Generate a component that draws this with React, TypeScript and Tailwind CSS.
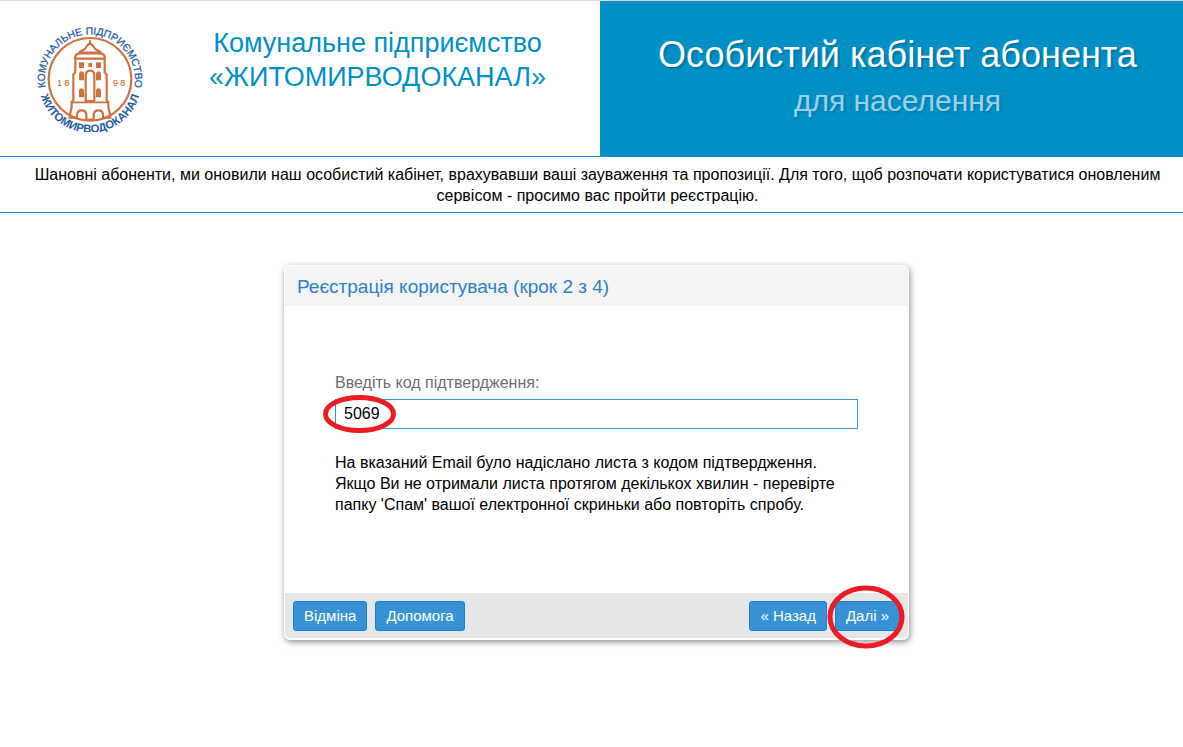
import React from "react";

function Logo() {
  return (
    <svg
      className="h-[106px] w-[106px] shrink-0"
      viewBox="36 33 318 318"
      role="img"
      aria-label="Житомирводоканал"
    >
      <defs>
        <path id="ring-top" d="M 61.9 217 A 135.200 135.200 0 1 1 328.1 217" />
        <path id="ring-bottom" d="M 41 199 A 154 154 0 0 0 349 199" />
      </defs>
      <g fill="none" stroke="#d0703a" strokeWidth="6.5" strokeLinejoin="round">
        <circle cx="195" cy="193" r="124" />
        <path d="M195 76 V88" />
        <path d="M195 86 C186 88 186 95 180 101 C174 107 166 106 162 113 H228 C224 106 216 107 210 101 C204 95 204 88 195 86 Z" />
        <path d="M150 131 Q150 115 166 115 H224 Q240 115 240 131 Z" />
        <path d="M151 133 V172 L145 179 V258 M239 133 V172 L245 179 V258" />
        <path d="M182 258 V182 Q182 167 195 167 Q208 167 208 182 V258 Z" />
        <path d="M145 260 H140 V275 L134 304 M245 260 H250 V275 L256 304" />
        <path d="M140 262 H250" strokeWidth="5" />
        <path d="M130 308 H156 V300 Q156 286 170 286 Q184 286 184 300 V314 H206 V300 Q206 286 220 286 Q234 286 234 300 V308 H260" />
      </g>
      <g fill="#d0703a">
        <rect x="162" y="142" width="15" height="17" />
        <rect x="190" y="144" width="11" height="12" />
        <rect x="213" y="142" width="15" height="17" />
        <path d="M162 196 V179 Q162 169 169.500 169 Q177 169 177 179 V196 Z" />
        <path d="M213 196 V179 Q213 169 220.500 169 Q228 169 228 179 V196 Z" />
        <path d="M162 247 V230 Q162 220 169.500 220 Q177 220 177 230 V247 Z" />
        <path d="M213 247 V230 Q213 220 220.500 220 Q228 220 228 230 V247 Z" />
      </g>
      <g
        fill="#d0703a"
        stroke="#d0703a"
        strokeWidth="0.5"
        fontFamily="'Liberation Sans', sans-serif"
        fontSize="26"
        textAnchor="middle"
      >
        <text x="115" y="214">1 8</text>
        <text x="282" y="214">9 8</text>
      </g>
      <g fill="#1f5ca8" fontFamily="'Liberation Sans', sans-serif" textAnchor="middle">
        <text fontSize="31" stroke="#1f5ca8" strokeWidth="0.8">
          <textPath href="#ring-top" startOffset="50%">
            КОМУНАЛЬНЕ ПІДПРИЄМСТВО
          </textPath>
        </text>
        <text fontSize="34" fontWeight="700">
          <textPath href="#ring-bottom" startOffset="50%">
            ЖИТОМИРВОДОКАНАЛ
          </textPath>
        </text>
      </g>
    </svg>
  );
}

function ActionButton({ children }: { children: React.ReactNode }) {
  return (
    <button
      type="button"
      className="h-[30px] rounded-[3px] border border-[#1c7fcb] bg-[#3892d6] px-2.5 text-[15px] leading-7 text-white"
    >
      {children}
    </button>
  );
}

export default function App() {
  return (
    <div className="bg-white font-['Liberation_Sans',Arial,sans-serif] text-base leading-[21px] text-black">
      <header className="flex border-t border-[#d9dade]">
        <div className="flex w-[600px] shrink-0 border-b border-[#0090c6] pt-[25px] pl-[37px]">
          <Logo />
          <p className="flex-1 pl-3 text-center text-[27px] leading-[34px] text-[#0090c6]">
            Комунальне підприємство
            <br />
            «ЖИТОМИРВОДОКАНАЛ»
          </p>
        </div>
        <div className="h-[156px] flex-1 bg-[#0090c6] pt-[34px] pl-3 text-center [text-shadow:2px_2px_2px_rgba(0,0,0,0.2)]">
          <h1 className="text-4xl leading-10 whitespace-nowrap text-white">
            Особистий кабінет абонента
          </h1>
          <p className="mt-2 text-3xl leading-9 text-white opacity-60">для населення</p>
        </div>
      </header>

      <p className="border-b border-[#0090c6] pt-[7px] pb-1.5 pl-3 text-center">
        Шановні абоненти, ми оновили наш особистий кабінет, врахувавши ваші зауваження та пропозиції.
        Для того, щоб розпочати користуватися оновленим сервісом - просимо вас пройти реєстрацію.
      </p>

      <main className="pt-[52px] pb-10 pl-2.5">
        <form className="mx-auto max-w-[625px] rounded-md border border-white bg-white shadow-[1px_2px_6px_rgba(0,0,0,0.45)]">
          <h2 className="rounded-t-[5px] bg-[#f4f4f4] px-3 pt-px text-[19px] leading-[39px] text-[#2a80ca]">
            Реєстрація користувача (крок 2 з 4)
          </h2>
          <div className="px-[50px] pt-[66px] pb-[78px]">
            <label htmlFor="code" className="block text-[#6e6e6e]">
              Введіть код підтвердження:
            </label>
            <div className="relative mt-1.5">
              <input
                id="code"
                type="text"
                defaultValue="5069"
                className="block h-[30px] w-full border border-[#3892d6] bg-white px-2 text-base text-black outline-none"
              />
              <svg
                className="pointer-events-none absolute -top-1 -left-3 h-[38px] w-[73px]"
                viewBox="0 0 73 38"
                aria-hidden="true"
              >
                <ellipse cx="36.5" cy="19" rx="34" ry="16.5" fill="none" stroke="#ed1c24" strokeWidth="5" />
              </svg>
            </div>
            <p className="mt-[23px]">
              На вказаний Email було надіслано листа з кодом підтвердження. Якщо Ви не отримали листа
              протягом декількох хвилин - перевірте папку 'Спам' вашої електронної скриньки або
              повторіть спробу.
            </p>
          </div>
          <div className="mb-px flex justify-between rounded-b-[5px] bg-[#e6e6e6] px-2 pt-2 pb-[7px]">
            <div className="flex gap-2">
              <ActionButton>Відміна</ActionButton>
              <ActionButton>Допомога</ActionButton>
            </div>
            <div className="flex gap-2">
              <ActionButton>« Назад</ActionButton>
              <div className="relative">
                <ActionButton>Далі »</ActionButton>
                <svg
                  className="pointer-events-none absolute -top-4 -left-2 h-[64px] w-[78px]"
                  viewBox="0 0 78 64"
                  aria-hidden="true"
                >
                  <ellipse cx="39" cy="32" rx="36" ry="29" fill="none" stroke="#ed1c24" strokeWidth="5" />
                </svg>
              </div>
            </div>
          </div>
        </form>
      </main>
    </div>
  );
}
